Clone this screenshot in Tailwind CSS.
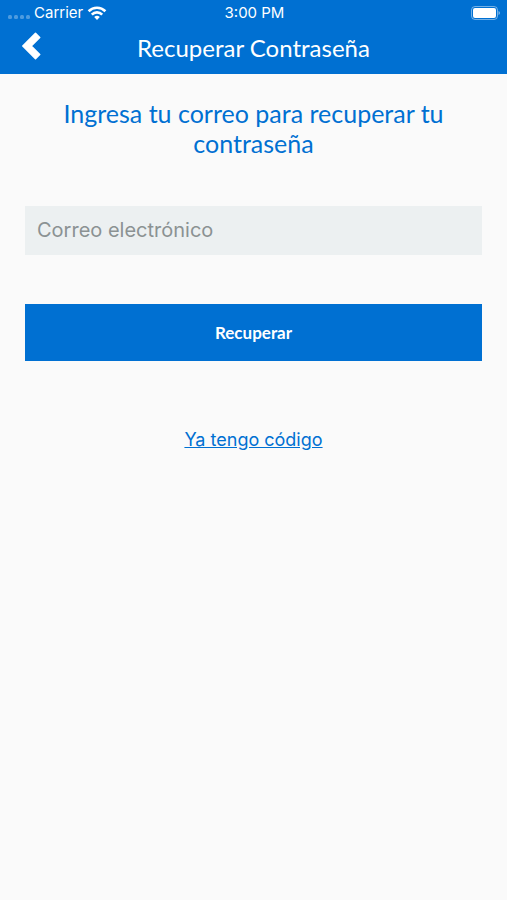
<!DOCTYPE html>
<html lang="es">

<head>
    <meta charset="UTF-8">
    <meta name="viewport" content="width=device-width, initial-scale=1.0">
    <title>Recuperar Contraseña</title>
    <script src="https://cdn.jsdelivr.net/npm/@tailwindcss/browser@4"></script>
</head>

<body class="min-h-screen bg-[#fafafa] font-['Lato',sans-serif] text-[#0070d2]">
    <header class="bg-[#0070d2] text-white">
        <!-- Status bar -->
        <div class="grid h-[26px] grid-cols-3 items-center pr-[6px] pl-2 font-['Inter',sans-serif] text-[15px]">
            <div class="flex items-center gap-1">
                <svg class="h-3 w-[22px]" viewBox="0 0 22 12" fill="#fff" fill-opacity=".3">
                    <rect x="0" y="8" width="4" height="4" rx="1.500" />
                    <rect x="6" y="8" width="4" height="4" rx="1.500" />
                    <rect x="12" y="8" width="4" height="4" rx="1.500" />
                    <rect x="18" y="8" width="4" height="4" rx="1.500" />
                </svg>
                <span>Carrier</span>
                <svg class="h-[14px] w-5" viewBox="0 0 20 14" fill="none" stroke="#fff" stroke-width="2.6">
                    <path d="M1.6 5.200a12 12 0 0 1 16.800 0" />
                    <path d="M4.8 8.600a7.300 7.300 0 0 1 10.400 0" />
                    <path d="M10 14 7.200 11.100a4 4 0 0 1 5.600 0z" fill="#fff" stroke="none" />
                </svg>
            </div>
            <span class="text-center">3:00 PM</span>
            <svg class="h-[14px] w-[30px] justify-self-end" viewBox="0 0 30 14">
                <rect x=".5" y=".5" width="26" height="13" rx="3.500" fill="none" stroke="#fff" stroke-opacity=".45" />
                <rect x="2" y="2" width="23" height="10" rx="2" fill="#fff" />
                <path d="M27.500 5c2 .8 2 3.200 0 4z" fill="#fff" fill-opacity=".5" />
            </svg>
        </div>
        <div class="grid h-12 grid-cols-[48px_1fr_48px] items-center pb-1">
            <button type="button" aria-label="Volver" class="flex h-full items-center pb-1 pl-[22px]">
                <svg class="h-7 w-5 shrink-0" viewBox="0 0 20 28" fill="#fff" stroke="#fff" stroke-width="1.500" stroke-linejoin="round">
                    <path d="M.8 14 13.500 1.300 17.700 5.500 9.200 14l8.500 8.500-4.200 4.200z" />
                </svg>
            </button>
            <h1 class="text-center text-2xl">Recuperar Contraseña</h1>
        </div>
    </header>

    <main class="px-[25px] pt-6">
        <h2 class="px-6 text-center text-[25px] leading-[30px]">Ingresa tu correo para recuperar tu contraseña</h2>
        <form>
            <input type="email" aria-label="Correo electrónico" placeholder="Correo electrónico"
                class="mt-12 h-[49px] w-full bg-[#ecf0f1] px-3 pb-[2px] font-['Inter',sans-serif] text-xl placeholder:text-[#8b9293] focus:outline-none">
            <button type="button" class="mt-[49px] block h-[57px] w-full bg-[#0070d2] text-[17px] font-bold text-white">Recuperar</button>
        </form>
        <div class="mt-[65px] text-center">
            <a href="#" class="font-['Inter',sans-serif] text-lg underline">Ya tengo código</a>
        </div>
    </main>
</body>

</html>
